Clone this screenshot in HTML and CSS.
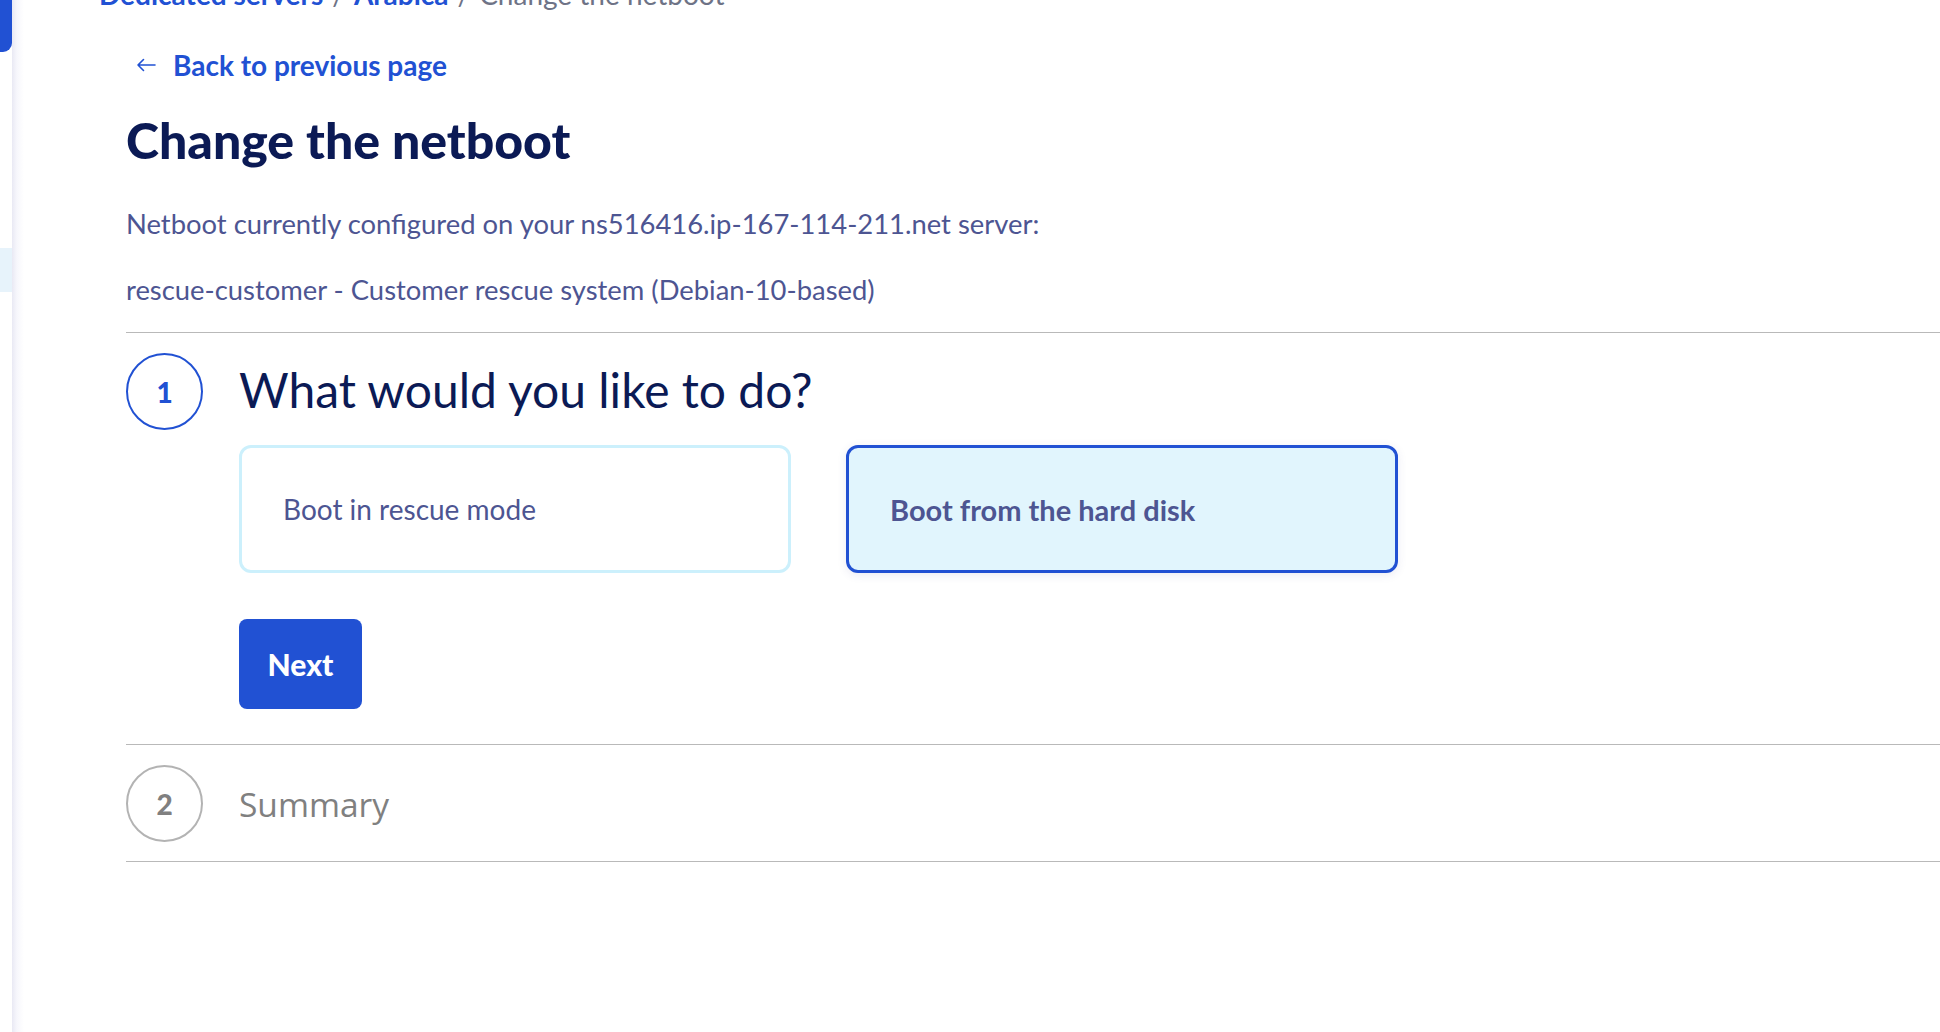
FILE: index.html
```html
<!DOCTYPE html>
<html lang="en">
<head>
<meta charset="utf-8">
<title>Change the netboot</title>
<link rel="stylesheet" href="styles.css">
</head>
<body>
<div class="app">
  <aside class="sidebar">
    <div class="sidebar-tab"></div>
    <div class="sidebar-active"></div>
  </aside>
  <main class="main">
    <nav class="breadcrumb">
      <a class="crumb-link" href="#">Dedicated servers</a>
      <span class="crumb-sep">/</span>
      <a class="crumb-link" href="#">Arabica</a>
      <span class="crumb-sep">/</span>
      <span class="crumb-current">Change the netboot</span>
    </nav>
    <div class="content">
      <a class="back-link" href="#">
        <svg class="back-arrow" viewBox="0 0 20 14" width="20" height="14" aria-hidden="true">
          <path d="M19 7H2M7.5 1.5L2 7l5.5 5.5" fill="none" stroke="currentColor" stroke-width="1.6" stroke-linecap="round" stroke-linejoin="round"/>
        </svg>
        <span>Back to previous page</span>
      </a>
      <h1 class="page-title">Change the netboot</h1>
      <p class="info">Netboot currently configured on your ns516416.ip-167-114-211.net server:</p>
      <p class="info">rescue-customer - Customer rescue system (Debian-10-based)</p>

      <section class="step step-active">
        <div class="step-header">
          <span class="step-number">1</span>
          <h2 class="step-title">What would you like to do?</h2>
        </div>
        <div class="step-body">
          <div class="choices">
            <div class="choice">Boot in rescue mode</div>
            <div class="choice choice-selected">Boot from the hard disk</div>
          </div>
          <button class="btn-next" type="button">Next</button>
        </div>
      </section>

      <section class="step step-disabled">
        <div class="step-header">
          <span class="step-number">2</span>
          <h2 class="step-title">Summary</h2>
        </div>
      </section>
    </div>
  </main>
</div>
</body>
</html>
```
FILE: styles.css
```css
* { box-sizing: border-box; }

html, body {
  margin: 0;
  padding: 0;
  background: #ffffff;
  font-family: "Lato", "Noto Sans", sans-serif;
  overflow: hidden;
}

.app {
  display: flex;
  min-height: 1032px;
}

.sidebar {
  width: 12px;
  flex: 0 0 12px;
  background: #ffffff;
  display: flex;
  flex-direction: column;
}

.sidebar-tab {
  height: 52px;
  background: #2151d3;
  border-bottom-right-radius: 9px;
}

.sidebar-active {
  margin-top: 196px;
  height: 44px;
  background: #e7f3fb;
}

.main {
  flex: 1;
  min-width: 0;
  background: linear-gradient(to right, #e9e9f4 0px, #f7f7fc 5px, #ffffff 12px) no-repeat;
  background-size: 14px 100%;
}

.breadcrumb {
  margin-top: -21px;
  padding-left: 87px;
  font-size: 28px;
  line-height: 30px;
  display: flex;
  gap: 9px;
  white-space: nowrap;
}

.crumb-link {
  color: #2151d3;
  font-weight: 700;
  text-decoration: none;
}

.crumb-sep,
.crumb-current {
  color: #6e7386;
}

.content {
  padding-left: 114px;
}

.back-link {
  margin-top: 41px;
  margin-left: 10px;
  display: inline-flex;
  align-items: center;
  gap: 17px;
  color: #2151d3;
  font-weight: 700;
  font-size: 28px;
  line-height: 30px;
  text-decoration: none;
}

.back-arrow {
  display: block;
}

.page-title {
  margin: 32px 0 0;
  color: #0b1a55;
  font-size: 50px;
  font-weight: 900;
  line-height: 56px;
}

.info {
  margin: 0;
  color: #4d5592;
  font-size: 27.4px;
  line-height: 30px;
}

.page-title + .info {
  margin-top: 41px;
}

.info + .info {
  margin-top: 36px;
}

.step {
  border-top: 1px solid #b9b9b9;
  margin-top: 27px;
}

.step + .step {
  margin-top: 0;
}

.step:last-child {
  border-bottom: 1px solid #b9b9b9;
}

.step-active {
  padding: 20px 0 35px;
}

.step-disabled {
  padding: 20px 0 19px;
}

.step-header {
  display: flex;
  align-items: center;
  gap: 36px;
}

.step-number {
  flex: 0 0 77px;
  width: 77px;
  height: 77px;
  border-radius: 50%;
  display: flex;
  align-items: center;
  justify-content: center;
  font-size: 28px;
  font-weight: 900;
}

.step-active .step-number {
  border: 2px solid #2151d3;
  color: #2151d3;
}

.step-disabled .step-number {
  border: 2px solid #b3b3b3;
  color: #808080;
}

.step-title {
  margin: 0;
  font-weight: 400;
}

.step-active .step-title {
  color: #0b1a55;
  font-size: 48px;
  line-height: 60px;
  margin-top: -3px;
}

.step-disabled .step-title {
  color: #808080;
  font-family: "Open Sans", "Noto Sans", sans-serif;
  font-size: 33.5px;
  line-height: 40px;
}

.step-body {
  margin-left: 113px;
  margin-top: 15px;
}

.choices {
  display: flex;
  gap: 55px;
}

.choice {
  width: 552px;
  height: 128px;
  border: 3px solid #ccf0fc;
  border-radius: 12px;
  background: #ffffff;
  display: flex;
  align-items: center;
  padding-left: 41px;
  color: #4d5592;
  font-size: 28px;
}

.choice-selected {
  border-color: #2151d3;
  background: #e1f5fd;
  font-weight: 700;
  font-size: 29px;
  box-shadow: 0 2px 10px rgba(60, 60, 140, 0.10);
}

.btn-next {
  margin-top: 46px;
  width: 123px;
  height: 90px;
  border: 0;
  border-radius: 8px;
  background: #2151d3;
  color: #ffffff;
  font-family: "Lato", "Noto Sans", sans-serif;
  font-size: 30px;
  font-weight: 900;
  display: block;
}
```
